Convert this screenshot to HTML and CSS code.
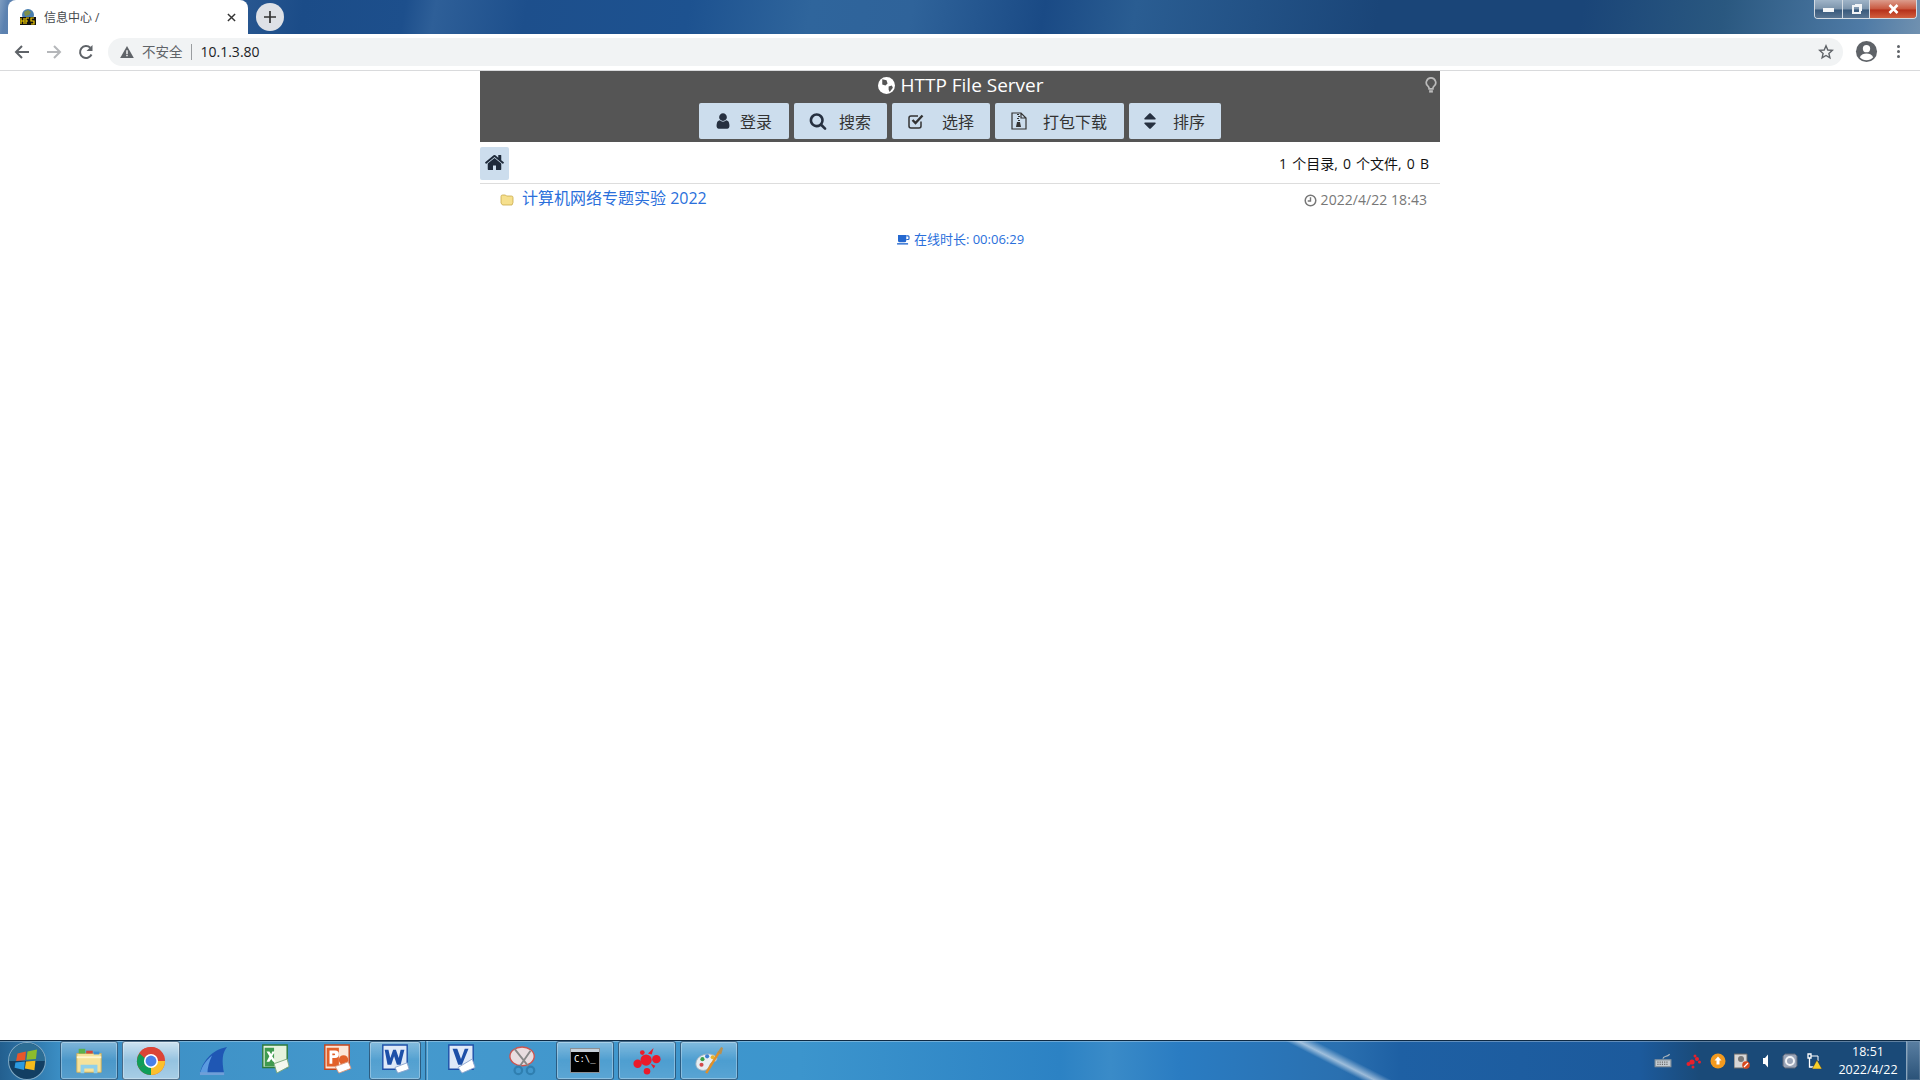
FILE: index.html
```html
<!DOCTYPE html>
<html lang="zh-CN">

<head>
    <meta charset="UTF-8">
    <title>信息中心 /</title>
    <link rel="stylesheet" href="styles.css">
</head>

<body>
    <header class="chrome">
        <div class="tabstrip">
            <div class="tab">
                <svg class="favicon" viewBox="0 0 16 16">
                    <circle cx="8" cy="6" r="6" fill="#4a7fb0"/>
                    <path d="M4 3l4-2 3 2-2 3-4 1z" fill="#7d8f4a"/>
                    <rect y="8" width="16" height="8" fill="#111"/>
                    <path d="M1 9v6M4 9v6M1 12h3M6 9v6M6 9h3M6 12h2M14 9h-3v3h3v3h-3" fill="none" stroke="#f5d000" stroke-width="1.2"/>
                </svg>
                <span class="tab-title">信息中心 /</span>
                <svg class="tab-close" viewBox="0 0 10 10"><path d="M1 1l8 8M9 1l-8 8" stroke="#333" stroke-width="1.6"/></svg>
            </div>
            <div class="new-tab">
                <svg viewBox="0 0 12 12"><path d="M6 0v12M0 6h12" stroke="#333" stroke-width="1.7"/></svg>
            </div>
            <div class="window-buttons">
                <div class="win-btn win-min"><span class="min-bar"></span></div>
                <div class="win-btn win-max"><span class="max-box"></span></div>
                <div class="win-btn win-close">
                    <svg viewBox="0 0 12 10"><path d="M2 1l8 8M10 1l-8 8" stroke="#fff" stroke-width="2.6"/></svg>
                </div>
            </div>
        </div>
        <div class="toolbar">
            <svg class="nav-icon" viewBox="0 0 16 16"><path d="M15 8H2M8 2L2 8l6 6" fill="none" stroke="#5f6368" stroke-width="2"/></svg>
            <svg class="nav-icon nav-off" viewBox="0 0 16 16"><path d="M1 8h13M8 2l6 6-6 6" fill="none" stroke="#b5b7ba" stroke-width="2"/></svg>
            <svg class="nav-icon" viewBox="0 0 16 16"><path d="M13.500 10.500A6 6 0 1 1 12.300 3.800" fill="none" stroke="#5f6368" stroke-width="2"/><path d="M14.500 1v6h-6z" fill="#5f6368"/></svg>
            <div class="omnibox">
                <svg class="warn" viewBox="0 0 16 14"><path d="M8 0l8 14H0z" fill="#5f6368"/><path d="M7.200 5h1.600v4.500H7.200zM7.200 10.500h1.600V12H7.200z" fill="#fff"/></svg>
                <span class="insecure">不安全</span>
                <span class="url">10.1.3.80</span>
                <svg class="star" viewBox="0 0 16 16"><path d="M8 1.800l1.800 4.200 4.500.4-3.400 3 1 4.500L8 11.500l-3.900 2.400 1-4.500-3.400-3 4.500-.4z" fill="none" stroke="#5f6368" stroke-width="1.400"/></svg>
            </div>
            <svg class="avatar" viewBox="0 0 24 24"><circle cx="12" cy="12" r="11" fill="#5f6368"/><circle cx="12" cy="9" r="3.800" fill="#fff"/><path d="M5 18c1.500-3 4-4 7-4s5.500 1 7 4c-1.800 2-4.300 3-7 3s-5.200-1-7-3z" fill="#fff"/></svg>
            <div class="menu-dots"><i></i><i></i><i></i></div>
        </div>
    </header>

    <main class="page">
        <div class="panel">
            <div class="panel-title">
                <svg class="globe" viewBox="0 0 16 16"><circle cx="8" cy="8" r="8" fill="#fff"/><path d="M4 2l4 1 1 3-2 2-3-1zM10 9l3-1 1 2-3 4-1-2z" fill="#555"/></svg>
                <span>HTTP File Server</span>
                <svg class="bulb" viewBox="0 0 12 18"><path d="M6 1a5 5 0 0 0-3 9c.8.700 1 1.500 1 2.500h4c0-1 .2-1.800 1-2.500a5 5 0 0 0-3-9z" fill="none" stroke="#bbb" stroke-width="1.800"/><path d="M4 14h4v2.500H4z" fill="#bbb"/></svg>
            </div>
            <nav class="panel-buttons">
                <a class="btn btn-login">
                    <svg class="fa" viewBox="0 0 1792 1792"><path d="M1536 1399q0 109-62.500 187t-150.500 78h-854q-88 0-150.500-78t-62.500-187q0-85 8.500-160.500t31.500-152 58.500-131 94-89 134.500-34.500q131 128 313 128t313-128q76 0 134.500 34.500t94 89 58.500 131 31.500 152 8.500 160.500zm-256-887q0 159-112.500 271.500t-271.500 112.500-271.500-112.500-112.500-271.500 112.500-271.500 271.500-112.500 271.500 112.500 112.500 271.500z"/></svg>
                    <span>登录</span>
                </a>
                <a class="btn btn-search">
                    <svg class="fa" viewBox="0 0 1792 1792"><path d="M1216 832q0-185-131.500-316.500t-316.500-131.500-316.500 131.500-131.500 316.500 131.500 316.500 316.500 131.500 316.500-131.500 131.500-316.500zm512 832q0 52-38 90t-90 38q-54 0-90-38l-343-342q-179 124-399 124-143 0-273.500-55.500t-225-150-150-225-55.500-273.500 55.500-273.500 150-225 225-150 273.500-55.500 273.500 55.500 225 150 150 225 55.500 273.500q0 220-124 399l343 343q37 37 37 90z"/></svg>
                    <span>搜索</span>
                </a>
                <a class="btn btn-select">
                    <svg class="fa" viewBox="0 0 18 18"><path d="M14 9.500V14a2 2 0 0 1-2 2H4a2 2 0 0 1-2-2V6a2 2 0 0 1 2-2h7" fill="none" stroke="#333" stroke-width="1.500"/><path d="M5.500 8l3 3 7-7.500" fill="none" stroke="#333" stroke-width="2.400"/></svg>
                    <span>选择</span>
                </a>
                <a class="btn btn-archive">
                    <svg class="fa" viewBox="0 0 16 18"><path d="M1 1h9l5 5v11H1zM10 1v5h5" fill="none" stroke="#333" stroke-width="1.200"/><path d="M6 2h2v1H6zM7 4h2v1H7zM6 6h2v1H6zM7 8h2v1H7z" fill="#333"/><path d="M6 10h3l1 5H5z" fill="#333"/></svg>
                    <span>打包下载</span>
                </a>
                <a class="btn btn-sort">
                    <svg class="fa" viewBox="0 0 1792 1792"><path d="M1408 1088q0 26-19 45l-448 448q-19 19-45 19t-45-19l-448-448q-19-19-19-45t19-45 45-19h896q26 0 45 19t19 45zm0-384q0 26-19 45t-45 19h-896q-26 0-45-19t-19-45 19-45l448-448q19-19 45-19t45 19l448 448q19 19 19 45z"/></svg>
                    <span>排序</span>
                </a>
            </nav>
        </div>

        <div class="path-bar">
            <a class="home-btn">
                <svg viewBox="0 0 1792 1792"><path d="M1472 992v480q0 26-19 45t-45 19h-384v-384h-256v384h-384q-26 0-45-19t-19-45v-480q0-1 .5-3t.5-3l575-474 575 474q1 2 1 6zm223-69l-62 74q-8 9-21 11h-3q-13 0-21-7l-692-577-692 577q-12 8-24 7-13-2-21-11l-62-74q-8-10-7-23.500t11-21.500l719-599q32-26 76-26t76 26l244 204v-195q0-14 9-23t23-9h192q14 0 23 9t9 23v408l219 182q10 8 11 21.500t-7 23.500z"/></svg>
            </a>
            <span class="summary">1 个目录, 0 个文件, 0 B</span>
        </div>

        <div class="file-row">
            <svg class="folder" viewBox="0 0 14 13"><path d="M1 3.500a1.500 1.500 0 0 1 1.500-1.500h3l1 1h5a1.500 1.500 0 0 1 1.500 1.500v5L12 12H2.500L1 10z" fill="#f6e08e" stroke="#c9a94a" stroke-width=".8"/></svg>
            <a class="file-link">计算机网络专题实验 2022</a>
            <span class="file-date">
                <svg viewBox="0 0 14 14"><circle cx="7" cy="7" r="5.700" fill="none" stroke="#777" stroke-width="1.600"/><path d="M7 3.500V7.500H4" fill="none" stroke="#777" stroke-width="1.500"/></svg>
                2022/4/22 18:43
            </span>
        </div>

        <div class="online">
            <svg viewBox="0 0 14 12"><path d="M1 1h9v6a2 2 0 0 1-2 2H3a2 2 0 0 1-2-2z" fill="#2468d0"/><path d="M10 2h2a1 1 0 0 1 1 1v2a1 1 0 0 1-1 1h-2" fill="none" stroke="#2468d0" stroke-width="1.300"/><path d="M0 10h12v1.500H0z" fill="#2468d0"/></svg>
            在线时长: 00:06:29
        </div>
    </main>

    <footer class="taskbar">
        <div class="start">
            <svg viewBox="0 0 36 36">
                <circle cx="18" cy="18" r="17.500" fill="#123f63" stroke="#7fa9c4"/>
                <path d="M1 18a17 17 0 0 1 34 0z" fill="#3f8db8" opacity=".6"/>
                <path d="M9 11l8-2-.8 8-8.500 1z" fill="#e8562a"/>
                <path d="M18.500 9l9-2-1 9-9 .8z" fill="#8cbc2c"/>
                <path d="M7 19.500l9-1-.8 8-9-2z" fill="#2c9ae0"/>
                <path d="M17 18.500l9-.8-1 9-9-1.500z" fill="#f6bb1c"/>
            </svg>
        </div>
        <div class="task-slots">
            <div class="slot boxed">
                <svg viewBox="0 0 32 30">
                    <path d="M3 7h26v20H3z" fill="#f6e29a" stroke="#cdb060"/>
                    <path d="M5 2h7v5H5z" fill="#5bb04a"/>
                    <path d="M13 4h7v3h-7z" fill="#d2483c"/>
                    <path d="M21 5h6v3h-6z" fill="#3c8ed2"/>
                    <path d="M3 11h26" stroke="#fff6cf" stroke-width="2"/>
                    <path d="M7 28v-9h18v9h-4v-5H11v5z" fill="#8fd0ea"/>
                </svg>
            </div>
            <div class="slot boxed active">
                <svg viewBox="0 0 32 32">
                    <circle cx="16" cy="16" r="15" fill="#db4437"/>
                    <path d="M16 16L3 23.500A15 15 0 0 0 16 31z" fill="#0f9d58"/>
                    <path d="M3 23.500A15 15 0 0 1 4 7.500L16 16z" fill="#0f9d58"/>
                    <path d="M16 16h15A15 15 0 0 1 16 31z" fill="#fbc02d"/>
                    <path d="M3.500 7.700A15 15 0 0 1 16 1a15 15 0 0 1 13 8H16a7 7 0 0 0-6.500 4z" fill="#db4437"/>
                    <circle cx="16" cy="16" r="7.500" fill="#fff"/>
                    <circle cx="16" cy="16" r="5.800" fill="#4a80e8"/>
                </svg>
            </div>
            <div class="slot">
                <svg viewBox="0 0 32 32"><path d="M2 30C4 18 14 4 31 1c-5 6-6 14-3 29z" fill="#1f57b4"/><path d="M2 30c2-9 7-15 13-20-3 6-5 13-5 20z" fill="#5b9be0"/><path d="M2 28h26v3H2z" fill="#6f9fd8"/></svg>
            </div>
            <div class="slot slot-office">
                <svg viewBox="0 0 32 32"><path d="M3 1h26v24H3z" fill="#e5f2dd" stroke="#2b7a3d" stroke-width="1.500"/><path d="M5 4h10v20H5z" fill="#3f9a4f"/><path d="M7 8l3 5-3 6h3l2-3 2 3h3l-4-6 3-5h-3l-1 3-2-3z" fill="#fff"/><path d="M15 21l14-5 2 8-13 7z" fill="#f4f8ef" stroke="#7aa87c"/></svg>
            </div>
            <div class="slot slot-office">
                <svg viewBox="0 0 32 32"><path d="M3 1h26v26H3z" fill="#fbe6d8" stroke="#c5451c" stroke-width="1.500"/><path d="M5 4h13v20H5z" fill="#e2612a"/><path d="M8 7h6a4 4 0 0 1 0 8h-3v6H8zM11 10v2h2a1 1 0 0 0 0-2z" fill="#fff"/><circle cx="23" cy="17" r="5" fill="#e2612a"/><path d="M14 24l14-5 3 7-13 5z" fill="#fff" stroke="#d89a80"/></svg>
            </div>
            <div class="slot boxed slot-word slot-office">
                <svg viewBox="0 0 32 32"><path d="M3 1h26v26H3z" fill="#dfe9f8" stroke="#1c4fa8" stroke-width="1.500"/><path d="M5 6l3 16h4l3-9 3 9h4l4-16h-4l-2 9-3-9h-3l-3 9-2-9z" fill="#1c4fa8"/><path d="M16 25l13-5 2 7-12 4z" fill="#fff" stroke="#8ea6cf"/></svg>
            </div>
            <div class="task-sep"></div>
            <div class="slot slot-office">
                <svg viewBox="0 0 32 32"><path d="M3 1h26v26H3z" fill="#dfe9f8" stroke="#1c4fa8" stroke-width="1.500"/><path d="M7 5l6 17h4l7-17h-4l-4 11-4-11z" fill="#1c4fa8"/><path d="M13 25l15-9 3 9-14 6z" fill="#fff" stroke="#8ea6cf"/></svg>
            </div>
            <div class="slot">
                <svg viewBox="0 0 32 32"><ellipse cx="15" cy="11" rx="13" ry="10" fill="#e9dde0" stroke="#cc5450" stroke-width="1.500"/><path d="M7 3l15 19M24 5L13 21" stroke="#888" stroke-width="2"/><circle cx="11" cy="26" r="4" fill="none" stroke="#2f7fb0" stroke-width="2.400"/><circle cx="24" cy="26" r="4" fill="none" stroke="#2f7fb0" stroke-width="2.400"/></svg>
            </div>
            <div class="slot boxed">
                <div class="cmd-icon"><span class="cmd-bar"></span><span class="cmd-text">C:\_</span></div>
            </div>
            <div class="slot boxed">
                <svg viewBox="0 0 32 32" fill="#ea1a2a"><circle cx="15" cy="15" r="6"/><circle cx="6" cy="19" r="4.500"/><circle cx="26" cy="14" r="4.500"/><circle cx="16" cy="27" r="3.500"/><circle cx="11" cy="7" r="2.500"/><path d="M17 8l6-6-2 7z"/><path d="M20 19l5 2-2 3z"/></svg>
            </div>
            <div class="slot boxed">
                <svg viewBox="0 0 32 32"><path d="M2 19C2 11 12 7 19 9c5 1 7 5 4 7-3 2-5 1-6 4-1 4-3 6-7 6-5 0-8-3-8-7z" fill="#e8eef2" stroke="#9fb2c0"/><circle cx="8" cy="20" r="2.200" fill="#d24b4b"/><circle cx="9" cy="14" r="2.200" fill="#3aa04a"/><circle cx="14" cy="11" r="2.200" fill="#3c7fd2"/><circle cx="20" cy="12" r="2.200" fill="#e6b52e"/><path d="M27 6L13 29" stroke="#e0902a" stroke-width="2.600"/><path d="M25 7l4-6 2 1-2 7z" fill="#b89050"/></svg>
            </div>
        </div>
        <div class="tray">
            <svg class="tray-icon tray-keyboard" viewBox="0 0 16 14"><path d="M1 6h14v6H1z" fill="#c5ccd2" stroke="#8a959e"/><path d="M3 8h10M3 10h10" stroke="#666" stroke-dasharray="1 1"/><path d="M8 5c0-3 3-1 6-4" fill="none" stroke="#aab4bc"/></svg>
            <svg class="tray-icon" viewBox="0 0 16 16" fill="#e8202c"><circle cx="6" cy="9" r="2.600"/><circle cx="2.500" cy="11" r="2"/><circle cx="11" cy="6" r="2"/><circle cx="13.500" cy="9" r="1.500"/><circle cx="7" cy="14" r="1.500"/><circle cx="9" cy="3" r="1.500"/></svg>
            <svg class="tray-icon" viewBox="0 0 16 16"><circle cx="8" cy="8" r="7.500" fill="#f29a1f"/><path d="M8 3.500l3.500 4H9.500v4h-3v-4H4.500z" fill="#fff"/></svg>
            <svg class="tray-icon" viewBox="0 0 16 16"><path d="M0 1h13v14H0z" fill="#d7d7d7" stroke="#666"/><circle cx="7" cy="6" r="3" fill="#777"/><circle cx="12" cy="12" r="3.800" fill="#d9481e"/><path d="M10 14l4-4" stroke="#fff" stroke-width="1.200"/></svg>
            <svg class="tray-icon" viewBox="0 0 16 16"><path d="M5 5h2l3-3.500v13L7 11H5z" fill="#fff"/></svg>
            <svg class="tray-icon" viewBox="0 0 16 16"><path d="M3 1h10l2 2v10l-2 2H3l-2-2V3z" fill="#9aa5b8" stroke="#5d6778"/><circle cx="8" cy="8" r="4" fill="none" stroke="#f2f4f7" stroke-width="2"/></svg>
            <svg class="tray-icon" viewBox="0 0 16 16"><path d="M2 1h3v4H2zM3.500 5v9h10" fill="none" stroke="#fff" stroke-width="1.300"/><path d="M5 3h7v5" fill="none" stroke="#fff"/><path d="M11 7l5 9H6z" fill="#f6cf2a" stroke="#333" stroke-width=".5"/></svg>
        </div>
        <div class="clock">
            <span>18:51</span>
            <span>2022/4/22</span>
        </div>
        <div class="show-desktop"></div>
    </footer>
</body>

</html>
```

FILE: styles.css
```css
* {
    box-sizing: border-box;
}

html,
body {
    height: 100%;
}

body {
    margin: 0;
    display: flex;
    flex-direction: column;
    overflow: hidden;
    font-family: "Open Sans", "Noto Sans CJK SC", sans-serif;
    background-color: #fff;
    color: #333;
}

/* browser frame */
.tabstrip {
    height: 34px;
    display: flex;
    align-items: flex-end;
    padding-left: 8px;
    background: linear-gradient(100deg, #7d9cc0 0, #5c82b0 8px, #1b4c88 300px, #1d4f8c 400px, #2e5f98 430px, #1d4f8c 520px, #1d5290 680px, #2f659c 800px, #2f639a 900px, #1a4a85 1030px, #2a5d92 1120px, #1a4578 1360px, #1a4578 1560px, #2a5880 1700px, #4f7ba6 1840px, #7e9ab4 1920px);
}

.tab {
    width: 240px;
    height: 34px;
    display: flex;
    align-items: center;
    padding: 0 12px 0 12px;
    background-color: #fff;
    border-radius: 8px 8px 0 0;
}

.favicon {
    width: 16px;
    height: 16px;
    margin-right: 8px;
}

.tab-title {
    flex: 1;
    font-size: 12px;
    color: #45494d;
}

.tab-close {
    width: 9px;
    height: 9px;
}

.new-tab {
    width: 28px;
    height: 28px;
    margin: 0 0 3px 8px;
    display: flex;
    align-items: center;
    justify-content: center;
    background-color: #dee1e6;
    border-radius: 50%;
}

.new-tab svg {
    width: 12px;
    height: 12px;
}

.window-buttons {
    margin: 0 3px 0 auto;
    align-self: flex-start;
    height: 19px;
    display: flex;
    border: 1px solid #d3dbe3;
    border-top: 0;
    border-radius: 0 0 4px 4px;
    overflow: hidden;
}

.win-btn {
    height: 18px;
    display: flex;
    align-items: center;
    justify-content: center;
    background: linear-gradient(#9fb4c8, #7b93ab 50%, #38597c 55%, #5a7693);
}

.win-min {
    width: 28px;
    border-right: 1px solid #d3dbe3;
}

.min-bar {
    width: 11px;
    height: 4px;
    margin-top: 2px;
    background-color: #f4f6f8;
}

.win-max {
    width: 27px;
    border-right: 1px solid #d3dbe3;
}

.max-box {
    width: 9px;
    height: 9px;
    border: 2px solid #f0f3f6;
    box-shadow: 2px -2px 0 -1px #f0f3f6;
}

.win-close {
    width: 46px;
    background: linear-gradient(#dc9c8c, #c9573e 50%, #b5301a 55%, #d25f3e);
}

.win-close svg {
    width: 13px;
    height: 10px;
}

.toolbar {
    height: 37px;
    display: flex;
    align-items: center;
    padding: 0 0 1px 0;
    background-color: #fff;
    border-bottom: 1px solid #d9dadc;
}

.nav-icon {
    width: 16px;
    height: 16px;
    margin-left: 14px;
    margin-right: 2px;
}

.omnibox {
    width: 1735px;
    height: 28px;
    margin-left: 12px;
    display: flex;
    align-items: center;
    padding: 0 9px 0 12px;
    background-color: #f1f3f4;
    border-radius: 14px;
}

.warn {
    width: 14px;
    height: 12px;
    margin-right: 8px;
}

.insecure {
    padding-right: 8px;
    border-right: 1px solid #9a9da0;
    font-size: 13.5px;
    line-height: 16px;
    color: #5f6368;
}

.url {
    flex: 1;
    padding-left: 9px;
    font-size: 14px;
    color: #202124;
}

.star {
    width: 16px;
    height: 16px;
}

.avatar {
    width: 23px;
    height: 23px;
    margin-left: 12px;
}

.menu-dots {
    display: flex;
    flex-direction: column;
    gap: 2px;
    margin-left: 19px;
}

.menu-dots i {
    width: 3px;
    height: 3px;
    background-color: #5f6368;
    border-radius: 50%;
}

/* page */
.page {
    flex: 1;
    width: 960px;
    margin: 0 auto;
}

.panel {
    height: 71px;
    background-color: #555;
}

.panel-title {
    position: relative;
    height: 28px;
    margin-bottom: 4px;
    padding-left: 2px;
    display: flex;
    align-items: center;
    justify-content: center;
    gap: 5px;
    font-size: 19px;
    color: #fff;
}

.globe {
    width: 17px;
    height: 17px;
}

.bulb {
    position: absolute;
    top: 6px;
    right: 3px;
    width: 12px;
    height: 17px;
}

.panel-buttons {
    display: flex;
    justify-content: center;
    gap: 5px;
}

.btn {
    height: 36px;
    display: flex;
    align-items: center;
    padding-left: 15px;
    background-color: #ccdded;
    border-radius: 2px;
    font-size: 16px;
    color: #333;
}

.btn .fa {
    width: 18px;
    height: 18px;
    fill: #263040;
}

.btn span {
    line-height: 36px;
    margin-top: 1px;
}

.btn-login {
    width: 90px;
}

.btn-login span {
    margin-left: 8px;
}

.btn-search {
    width: 93px;
}

.btn-search span {
    margin-left: 12px;
}

.btn-select {
    width: 98px;
}

.btn-select span {
    margin-left: 17px;
}

.btn-archive {
    width: 129px;
}

.btn-archive span {
    margin-left: 15px;
}

.btn-sort {
    width: 92px;
    padding-left: 11px;
}

.btn-sort .fa {
    width: 20px;
    height: 20px;
}

.btn-sort span {
    margin-left: 13px;
}

.path-bar {
    height: 42px;
    display: flex;
    align-items: flex-start;
    justify-content: space-between;
    padding: 5px 11px 0 0;
    border-bottom: 1px solid #ddd;
}

.home-btn {
    width: 29px;
    height: 33px;
    display: flex;
    align-items: center;
    justify-content: center;
    background-color: #ccdded;
    border-radius: 2px;
}

.home-btn svg {
    width: 21px;
    height: 21px;
    margin-bottom: 2px;
    fill: #1e2a3a;
}

.summary {
    margin-top: 9px;
    font-size: 14px;
    line-height: 16px;
    word-spacing: 1.5px;
    color: #111;
}

.file-row {
    display: flex;
    align-items: flex-start;
    height: 46px;
    padding: 2px 13px 0 20px;
}

.folder {
    width: 14px;
    height: 13px;
    margin: 7px 8px 0 0;
}

.file-link {
    flex: 1;
    font-size: 16px;
    line-height: 24px;
    color: #2a6fdb;
}

.file-date {
    display: flex;
    align-items: center;
    gap: 4px;
    margin-top: 4px;
    font-size: 14px;
    line-height: 20px;
    letter-spacing: 0.05px;
    color: #777;
}

.file-date svg {
    width: 13px;
    height: 13px;
}

.online {
    display: flex;
    align-items: center;
    justify-content: center;
    gap: 4px;
    padding-left: 1px;
    font-size: 13px;
    line-height: 18px;
    color: #2a6fdb;
}

.online svg {
    width: 13px;
    height: 11px;
}

/* windows taskbar */
.taskbar {
    height: 40px;
    display: flex;
    align-items: stretch;
    border-top: 1px solid #0e2a44;
    background:
        linear-gradient(27deg, transparent 618px, rgba(255, 255, 255, 0.55) 624px, transparent 632px),
        linear-gradient(90deg, #235f8f 0, #3b8ec4 60px, #4599cd 400px, #3c95cd 800px, #2c82c4 1060px, #3a8bc8 1110px, #2a7cc2 1180px, #2a70b0 1340px, #1e60a4 1400px, #1c5a9c 1640px, #1a4a78 1700px, #1a4a78 1920px);
    box-shadow: inset 0 1px 0 rgba(255, 255, 255, 0.3);
}

.start {
    width: 60px;
    display: flex;
    align-items: center;
    padding-left: 8px;
}

.start svg {
    width: 38px;
    height: 38px;
}

.task-slots {
    display: flex;
    gap: 4px;
}

.slot {
    width: 58px;
    display: flex;
    align-items: center;
    justify-content: center;
    border: 1px solid transparent;
    border-radius: 3px;
}

.slot svg {
    width: 30px;
    height: 30px;
}

.slot-office {
    padding-bottom: 3px;
}

.slot.boxed {
    border-color: rgba(15, 45, 75, 0.6);
    background: linear-gradient(rgba(255, 255, 255, 0.35), rgba(255, 255, 255, 0.08) 50%, rgba(255, 255, 255, 0.14));
    box-shadow: inset 0 0 0 1px rgba(255, 255, 255, 0.3);
}

.slot.active {
    background: linear-gradient(rgba(255, 255, 255, 0.75), rgba(255, 255, 255, 0.45) 50%, rgba(255, 255, 255, 0.55));
}

.slot-word {
    width: 52px;
    margin-left: -1px;
}

.task-sep {
    width: 3px;
    border-left: 1px solid rgba(15, 45, 75, 0.5);
    border-right: 1px solid rgba(255, 255, 255, 0.3);
}

.cmd-icon {
    width: 30px;
    height: 25px;
    background-color: #000;
    border: 1px solid #8a8f94;
    color: #fff;
    font-family: "DejaVu Sans Mono", monospace;
    font-size: 9px;
    line-height: 14px;
}

.cmd-bar {
    display: block;
    height: 3px;
    background-color: #c8d0d8;
}

.cmd-text {
    display: block;
    padding-left: 3px;
}

.tray {
    margin-left: auto;
    display: flex;
    align-items: center;
    gap: 8px;
    padding-right: 10px;
}

.tray-icon {
    width: 16px;
    height: 16px;
}

.tray-keyboard {
    width: 18px;
    height: 18px;
    margin-right: 6px;
}

.clock {
    width: 72px;
    display: flex;
    flex-direction: column;
    align-items: center;
    justify-content: center;
    gap: 2px;
    margin-right: 2px;
    font-size: 12.5px;
    line-height: 16px;
    color: #fff;
}

.show-desktop {
    width: 14px;
    background: linear-gradient(#5a7fa2, #2a5278);
    border-left: 1px solid #8aa5bd;
    box-shadow: inset 0 0 0 1px rgba(255, 255, 255, 0.15);
}
```
